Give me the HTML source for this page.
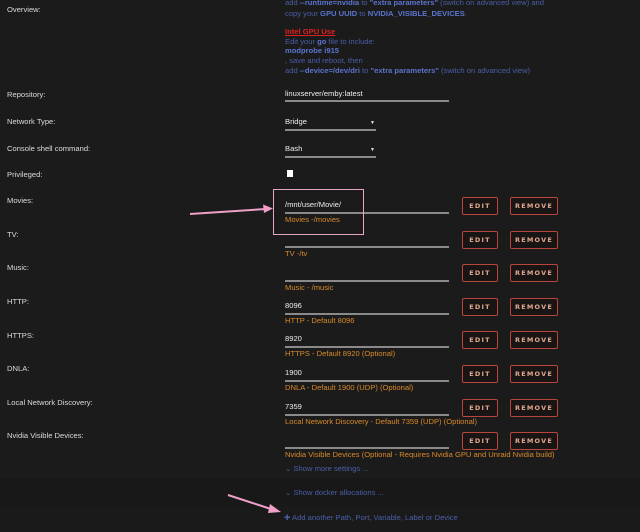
<!DOCTYPE html>
<html><head><meta charset="utf-8"><style>
html,body{margin:0;padding:0;}
body{width:640px;height:532px;background:#1b1b1b;position:relative;overflow:hidden;font-family:"Liberation Sans","DejaVu Sans",sans-serif;font-size:7.6px;color:#e6e6e6;}
.a{position:absolute;white-space:nowrap;line-height:10px;}
.lbl{left:7px;color:#dcdcdc;}
.b{color:#4a5fa8;}
.bb{color:#5b74d0;font-weight:bold;}
.ul{position:absolute;left:285px;width:164px;height:2px;background:#8a8a8a;}
.desc{left:285px;color:#d98a2a;}
.btn{position:absolute;height:16px;border:1.5px solid #b8463c;border-radius:2px;color:#e0a88e;font-weight:bold;font-size:6.5px;letter-spacing:1.2px;text-align:center;line-height:16px;box-sizing:content-box;background:#1a1515;font-family:"DejaVu Sans",sans-serif;}
.e{left:462px;width:34px;}
.r{left:510px;width:46px;}
.val{left:285px;color:#eee;}
</style></head><body>
<div style="position:absolute;left:0;top:478px;width:640px;height:28px;background:#181818"></div>
<div style="position:absolute;left:0;top:506px;width:640px;height:26px;background:#1a1a1a"></div>

<div class="a lbl" style="top:5px">Overview:</div>
<div class="a b" style="left:285px;top:-2px">add <span class="bb">--runtime=nvidia</span> to <span class="bb">"extra parameters"</span> (switch on advanced view) and</div>
<div class="a b" style="left:285px;top:9px">copy your <span class="bb">GPU UUID</span> to <span class="bb">NVIDIA_VISIBLE_DEVICES</span>.</div>
<div class="a" style="left:285px;top:27px;color:#e0201e;font-weight:bold;text-decoration:underline">Intel GPU Use</div>
<div class="a b" style="left:285px;top:37px">Edit your <span class="bb">go</span> file to include:</div>
<div class="a bb" style="left:285px;top:46px">modprobe i915</div>
<div class="a b" style="left:285px;top:56px">, save and reboot, then</div>
<div class="a b" style="left:285px;top:66px">add <span class="bb">--device=/dev/dri</span> to <span class="bb">"extra parameters"</span> (switch on advanced view)</div>

<div class="a lbl" style="top:90px">Repository:</div>
<div class="a val" style="top:89px">linuxserver/emby:latest</div>
<div class="ul" style="top:100px"></div>

<div class="a lbl" style="top:117px">Network Type:</div>
<div class="a val" style="top:117px">Bridge</div><div class="a" style="left:370px;top:118px;font-size:5px">▼</div>
<div class="ul" style="top:129px;width:91px"></div>

<div class="a lbl" style="top:144px">Console shell command:</div>
<div class="a val" style="top:144px">Bash</div><div class="a" style="left:370px;top:145px;font-size:5px">▼</div>
<div class="ul" style="top:156px;width:91px"></div>

<div class="a lbl" style="top:170px">Privileged:</div>
<div style="position:absolute;left:287px;top:170px;width:6px;height:7px;background:#fff"></div>

<div class="a lbl" style="top:196px">Movies:</div>
<div class="a val" style="top:200px">/mnt/user/Movie/</div>
<div class="ul" style="top:212px"></div>
<div class="a desc" style="top:215px">Movies -/movies</div>
<div class="btn e" style="top:197px">EDIT</div><div class="btn r" style="top:197px">REMOVE</div>

<div class="a lbl" style="top:230px">TV:</div>
<div class="ul" style="top:246px"></div>
<div class="a desc" style="top:249px">TV -/tv</div>
<div class="btn e" style="top:231px">EDIT</div><div class="btn r" style="top:231px">REMOVE</div>

<div class="a lbl" style="top:263px">Music:</div>
<div class="ul" style="top:280px"></div>
<div class="a desc" style="top:283px">Music - /music</div>
<div class="btn e" style="top:264px">EDIT</div><div class="btn r" style="top:264px">REMOVE</div>

<div class="a lbl" style="top:297px">HTTP:</div>
<div class="a val" style="top:301px">8096</div>
<div class="ul" style="top:313px"></div>
<div class="a desc" style="top:316px">HTTP - Default 8096</div>
<div class="btn e" style="top:298px">EDIT</div><div class="btn r" style="top:298px">REMOVE</div>

<div class="a lbl" style="top:331px">HTTPS:</div>
<div class="a val" style="top:334px">8920</div>
<div class="ul" style="top:346px"></div>
<div class="a desc" style="top:349px">HTTPS - Default 8920 (Optional)</div>
<div class="btn e" style="top:331px">EDIT</div><div class="btn r" style="top:331px">REMOVE</div>

<div class="a lbl" style="top:364px">DNLA:</div>
<div class="a val" style="top:368px">1900</div>
<div class="ul" style="top:380px"></div>
<div class="a desc" style="top:383px">DNLA - Default 1900 (UDP) (Optional)</div>
<div class="btn e" style="top:365px">EDIT</div><div class="btn r" style="top:365px">REMOVE</div>

<div class="a lbl" style="top:398px">Local Network Discovery:</div>
<div class="a val" style="top:402px">7359</div>
<div class="ul" style="top:414px"></div>
<div class="a desc" style="top:417px">Local Network Discovery - Default 7359 (UDP) (Optional)</div>
<div class="btn e" style="top:399px">EDIT</div><div class="btn r" style="top:399px">REMOVE</div>

<div class="a lbl" style="top:431px">Nvidia Visible Devices:</div>
<div class="ul" style="top:447px"></div>
<div class="a desc" style="top:450px">Nvidia Visible Devices (Optional - Requires Nvidia GPU and Unraid Nvidia build)</div>
<div class="btn e" style="top:432px">EDIT</div><div class="btn r" style="top:432px">REMOVE</div>

<div class="a b" style="left:285px;top:464px">⌄ Show more settings ...</div>
<div class="a b" style="left:285px;top:488px">⌄ Show docker allocations ...</div>
<div class="a b" style="left:284px;top:513px">✚ Add another Path, Port, Variable, Label or Device</div>

<div style="position:absolute;left:273px;top:189px;width:89px;height:44px;border:1.5px solid #e8a6c8"></div>
<svg width="640" height="532" style="position:absolute;left:0;top:0">
<g stroke="#f0a0c8" stroke-width="2" fill="#f0a0c8">
<line x1="190" y1="214" x2="266" y2="209"/>
<polygon points="273,208.5 263,204.5 264,213" stroke="none"/>
<line x1="228" y1="495" x2="274" y2="510"/>
<polygon points="281,512 270,504 268,513" stroke="none"/>
</g></svg>
</body></html>
